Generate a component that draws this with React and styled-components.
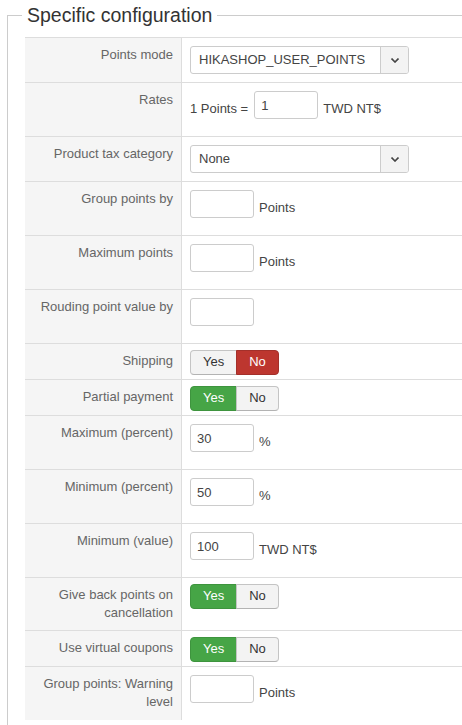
import React from "react";
import styled, { createGlobalStyle, css } from "styled-components";

const GlobalStyle = createGlobalStyle`
  html, body {
    margin: 0;
    padding: 0;
    background: #ffffff;
    overflow: hidden;
  }
  body {
    font-family: "Liberation Sans", Arial, Helvetica, sans-serif;
    font-size: 13px;
    line-height: 18px;
    color: #333333;
  }
`;

const Fieldset = styled.fieldset`
  margin: 1px 0 0 7px;
  padding: 8px 0 12px 17px;
  border: 1px solid #cccccc;
  border-right: none;
  min-width: 0;
`;

const Legend = styled.legend`
  margin-left: -3px;
  padding: 0 5px;
  font-size: 19.5px;
  line-height: 28px;
  color: #333333;
`;

const Table = styled.div`
  display: flex;
  flex-direction: column;
`;

const Row = styled.div`
  display: flex;
  border-top: 1px solid #dddddd;
`;

const LabelCell = styled.div`
  box-sizing: border-box;
  flex: 0 0 157px;
  padding: 8px;
  background: #f5f5f5;
  border-right: 1px solid #dddddd;
  color: #666666;
  text-align: right;
  line-height: 18px;
`;

const ValueCell = styled.div`
  flex: 1;
  display: flex;
  align-items: flex-start;
  ${(p) =>
    p.$compact
      ? css`
          padding: 6px 8px 4px 8px;
        `
      : css`
          padding: 8px;
        `}
`;

const TextInput = styled.input`
  box-sizing: border-box;
  width: 64px;
  height: 28px;
  margin: 0 0 9px 0;
  padding: 4px 6px;
  border: 1px solid #cccccc;
  border-radius: 3px;
  background: #ffffff;
  font-family: inherit;
  font-size: 13px;
  line-height: 18px;
  color: #444444;
  outline: none;
`;

const Unit = styled.span`
  padding-top: 9px;
  white-space: nowrap;
  color: #444444;
  ${(p) => (p.$before ? "margin-right: 6px;" : "margin-left: 5px;")}
`;

const SelectBox = styled.div`
  box-sizing: border-box;
  display: flex;
  width: 219px;
  height: 28px;
  border: 1px solid #cccccc;
  border-radius: 3px;
  background: #ffffff;
  overflow: hidden;
`;

const SelectValue = styled.span`
  flex: 1;
  padding: 0 8px;
  line-height: 26px;
  color: #444444;
  white-space: nowrap;
`;

const SelectCaret = styled.span`
  flex: 0 0 27px;
  display: flex;
  align-items: center;
  justify-content: center;
  background: #f3f3f3;
  border-left: 1px solid #cccccc;
`;

const ToggleGroup = styled.div`
  display: inline-flex;
`;

const toneStyles = {
  yes: css`
    background: #46a546;
    border-color: #3e943e;
    color: #ffffff;
  `,
  no: css`
    background: #bd362f;
    border-color: #a3302a;
    color: #ffffff;
  `,
  off: css`
    background: #f3f3f3;
    border-color: #c4c4c4 #c4c4c4 #b3b3b3;
    color: #333333;
  `,
};

const ToggleButton = styled.button`
  box-sizing: border-box;
  height: 25px;
  padding: 2px 12px 3px;
  border: 1px solid;
  font-family: inherit;
  font-size: 13px;
  line-height: 18px;
  cursor: pointer;
  ${(p) => toneStyles[p.$tone]}
  &:first-child {
    border-radius: 4px 0 0 4px;
  }
  &:last-child {
    margin-left: -1px;
    border-radius: 0 4px 4px 0;
  }
`;

// small down chevron used on the select's button
const Caret = () => (
  <svg width="8" height="5" viewBox="0 0 8 5" aria-hidden="true">
    <path d="M0.5 0.5 L4 4 L7.5 0.5" fill="none" stroke="#444" strokeWidth="1.6" />
  </svg>
);

const Select = ({ value }) => (
  <SelectBox>
    <SelectValue>{value}</SelectValue>
    <SelectCaret>
      <Caret />
    </SelectCaret>
  </SelectBox>
);

const Toggle = ({ on }) => (
  <ToggleGroup>
    <ToggleButton type="button" $tone={on ? "yes" : "off"}>
      Yes
    </ToggleButton>
    <ToggleButton type="button" $tone={on ? "off" : "no"}>
      No
    </ToggleButton>
  </ToggleGroup>
);

const Amount = ({ value = "", before, after }) => (
  <>
    {before && <Unit $before>{before}</Unit>}
    <TextInput defaultValue={value} />
    {after && <Unit>{after}</Unit>}
  </>
);

const settings = [
  { label: "Points mode", kind: "select", value: "HIKASHOP_USER_POINTS" },
  { label: "Rates", kind: "amount", value: "1", before: "1 Points =", after: "TWD NT$" },
  { label: "Product tax category", kind: "select", value: "None" },
  { label: "Group points by", kind: "amount", after: "Points" },
  { label: "Maximum points", kind: "amount", after: "Points" },
  { label: "Rouding point value by", kind: "amount" },
  { label: "Shipping", kind: "toggle", on: false },
  { label: "Partial payment", kind: "toggle", on: true },
  { label: "Maximum (percent)", kind: "amount", value: "30", after: "%" },
  { label: "Minimum (percent)", kind: "amount", value: "50", after: "%" },
  { label: "Minimum (value)", kind: "amount", value: "100", after: "TWD NT$" },
  { label: "Give back points on cancellation", kind: "toggle", on: true },
  { label: "Use virtual coupons", kind: "toggle", on: true },
  { label: "Group points: Warning level", kind: "amount", after: "Points" },
];

const renderValue = (s) => {
  if (s.kind === "select") return <Select value={s.value} />;
  if (s.kind === "toggle") return <Toggle on={s.on} />;
  return <Amount value={s.value} before={s.before} after={s.after} />;
};

export default function App() {
  return (
    <>
      <GlobalStyle />
      <Fieldset>
        <Legend>Specific configuration</Legend>
        <Table>
          {settings.map((s) => (
            <Row key={s.label}>
              <LabelCell>{s.label}</LabelCell>
              <ValueCell $compact={s.kind === "toggle"}>{renderValue(s)}</ValueCell>
            </Row>
          ))}
        </Table>
      </Fieldset>
    </>
  );
}
